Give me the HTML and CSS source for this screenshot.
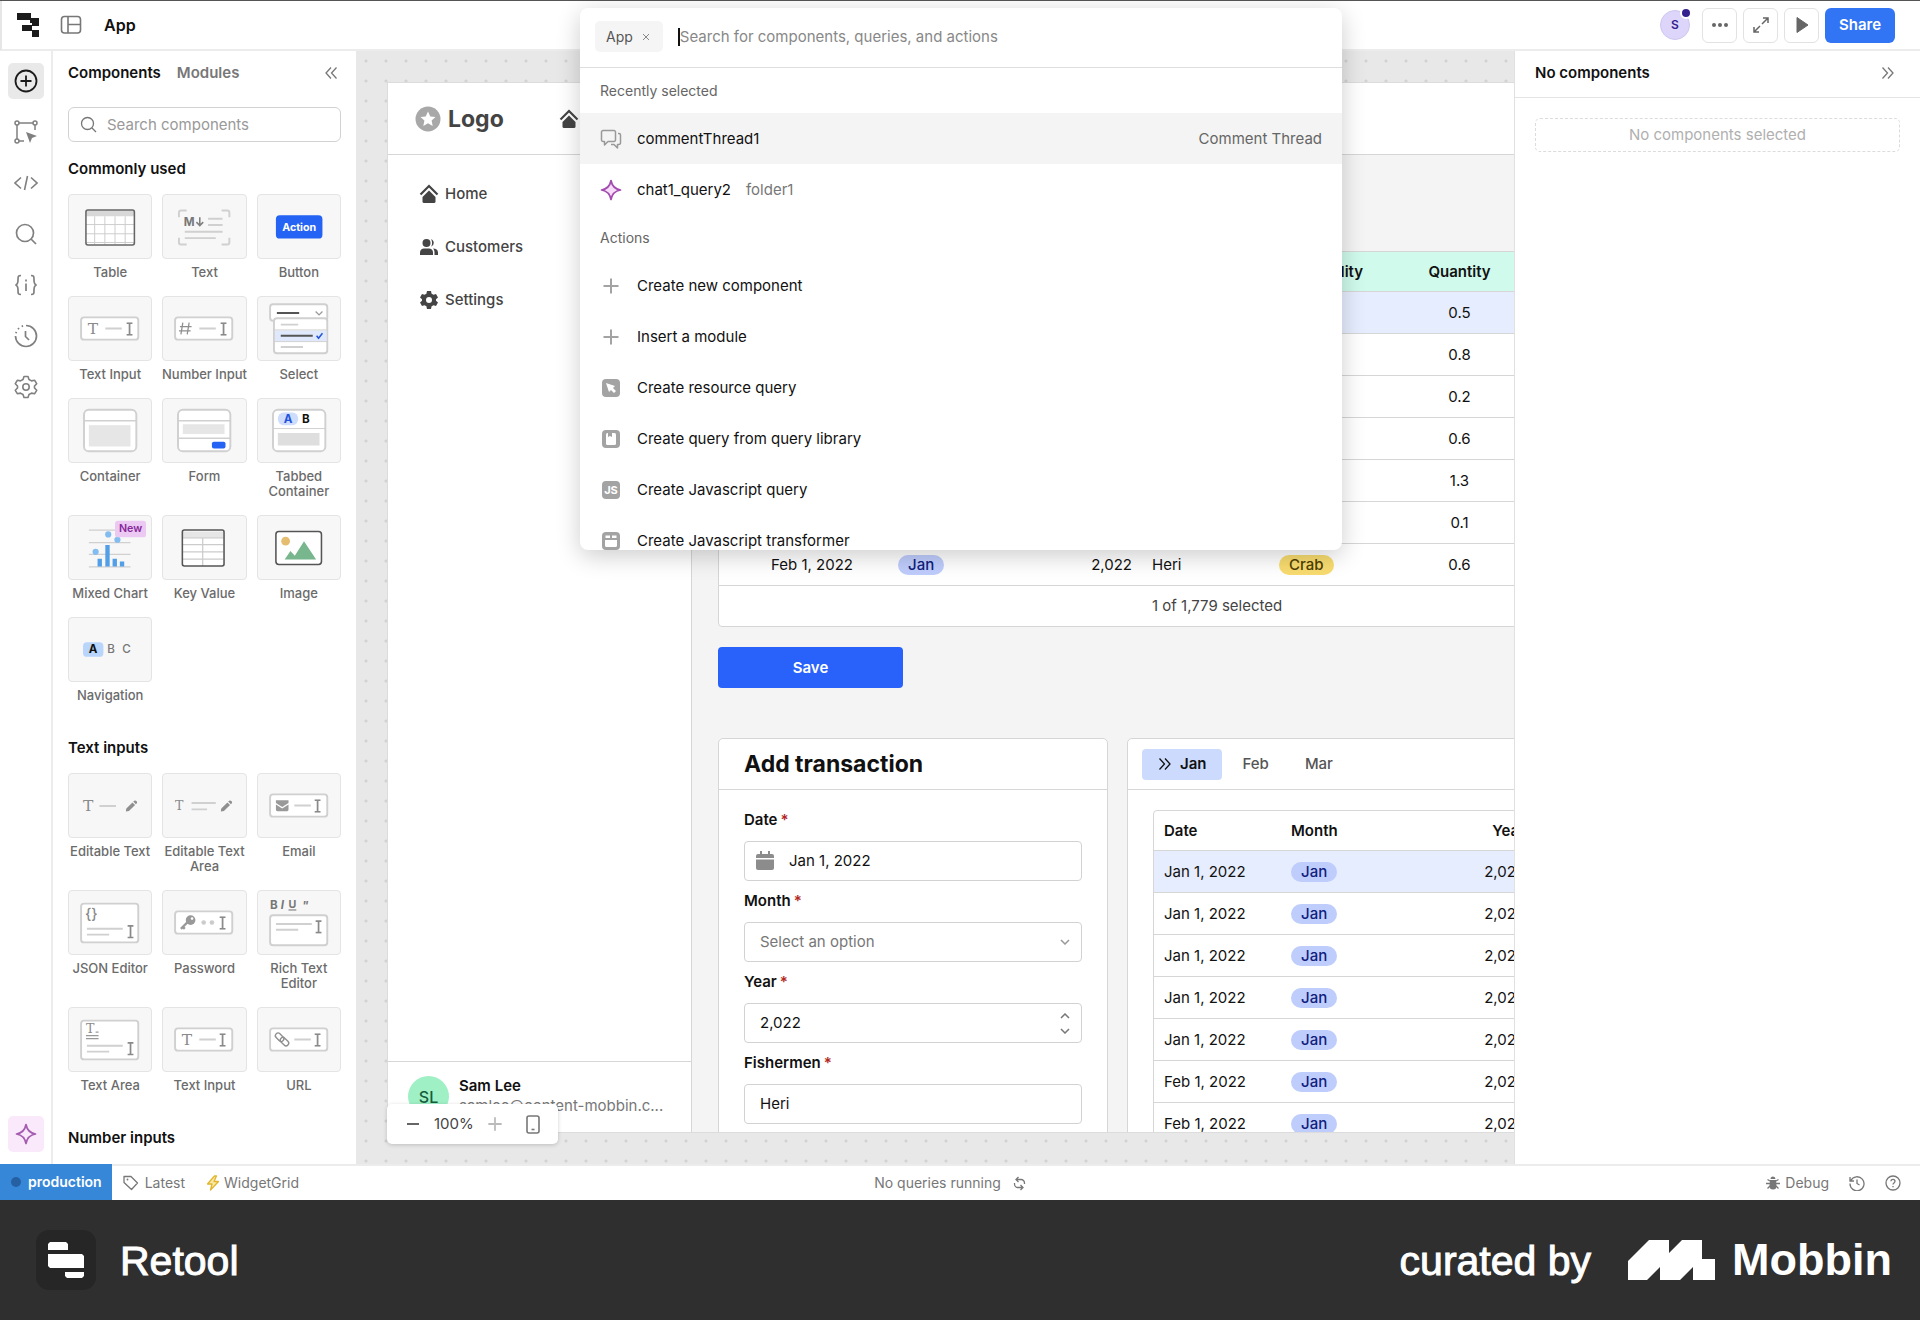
FILE: index.html
```html
<!DOCTYPE html>
<html lang="en">
<head>
    <meta charset="UTF-8">
    <meta name="viewport" content="width=device-width, initial-scale=1.0">
    <title>App | Retool</title>
    <link rel="stylesheet" href="styles.css">
</head>
<body>

<!-- shared icon parts -->
<svg class="defs" aria-hidden="true">
    <symbol id="ibeam" viewBox="0 0 8 14"><path d="M1 1h6M1 13h6M4 1v12" fill="none" stroke="#8a8a8a" stroke-width="1.8"/></symbol>
    <symbol id="pencil" viewBox="0 0 12 12"><path d="M0 12l.7-3.4L7 2.3 9.7 5 3.4 11.3zM7.8 1.5l1-1a1.3 1.3 0 0 1 1.8 0l.9.9a1.3 1.3 0 0 1 0 1.8l-1 1z" fill="#8f8f8f"/></symbol>
    <symbol id="home" viewBox="0 0 20 20"><path d="M1.500 10.500L10 2l8.500 8.500" fill="none" stroke="#444" stroke-width="2.200"/><path d="M10 6.500l6.500 6.500v4.500a1.500 1.500 0 0 1-1.500 1.500H5a1.500 1.500 0 0 1-1.500-1.500V13z" fill="#444"/></symbol>
    <symbol id="sparkle" viewBox="0 0 22 22"><path d="M11 1.5c1 5.500 3.500 8.500 9.500 9.500-6 1-8.500 4-9.500 9.500C10 15 7.500 12 1.500 11 7.500 10 10 7 11 1.500z" stroke-width="1.700" stroke-linejoin="round"/></symbol>
    <symbol id="chevrons" viewBox="0 0 14 14"><path d="M1.500 1.500L6.500 7l-5 5.500M7 1.500L12 7l-5 5.500" fill="none" stroke="currentColor" stroke-width="1.300"/></symbol>
    <symbol id="plus" viewBox="0 0 18 18"><path d="M9 1.500v15M1.500 9h15" fill="none" stroke="currentColor" stroke-width="2"/></symbol>
</svg>

<header class="topbar">
    <svg class="brand" width="24" height="24" viewBox="0 0 24 24"><path d="M1 0h14v5h8v8h-7v4h7v7h-7v-6H6v-6h10v-2h-2V7H1z" fill="#1b1b1b"/></svg>
    <button class="plain" aria-label="Toggle panels"><svg width="22" height="20" viewBox="0 0 22 20"><g fill="none" stroke="#777" stroke-width="1.600"><rect x="1.500" y="1.500" width="19" height="16.500" rx="3"/><path d="M8 1.500V18M8 9.500h12.500"/></g></svg></button>
    <h1>App</h1>
    <div class="top-actions">
        <span class="me">S<i></i></span>
        <button class="tool" aria-label="More"><svg width="18" height="6" viewBox="0 0 18 6"><g fill="#666"><circle cx="3" cy="3" r="2"/><circle cx="9" cy="3" r="2"/><circle cx="15" cy="3" r="2"/></g></svg></button>
        <button class="tool" aria-label="Expand"><svg width="18" height="18" viewBox="0 0 18 18"><path d="M11 2h5v5M16 2l-6 6M7 16H2v-5M2 16l6-6" fill="none" stroke="#666" stroke-width="1.500"/></svg></button>
        <button class="tool" aria-label="Preview"><svg width="16" height="18" viewBox="0 0 16 18"><path d="M3 1.500L14 9 3 16.500z" fill="#666" stroke="#666" stroke-linejoin="round"/></svg></button>
        <button class="share">Share</button>
    </div>
</header>

<div class="workspace">
    <nav class="rail">
        <button class="active" aria-label="Components"><svg width="24" height="24" viewBox="0 0 24 24"><g fill="none" stroke="#1b1b1b" stroke-width="1.800"><circle cx="12" cy="12" r="10.500"/><path d="M12 6.500v11M6.500 12h11"/></g></svg></button>
        <button aria-label="Tree"><svg width="24" height="24" viewBox="0 0 24 24"><g fill="none" stroke="#808080" stroke-width="1.500"><circle cx="3" cy="3" r="2"/><circle cx="21" cy="3" r="2"/><circle cx="3" cy="21" r="2"/><path d="M5 3h14M3 5v14M5 21h5M21 5v5"/></g><path d="M12 12l11 4-5 2-2 5z" fill="#808080"/></svg></button>
        <button aria-label="Code"><svg width="24" height="24" viewBox="0 0 24 24"><path d="M7 6.500L1 12l6 5.500M17 6.500l6 5.500-6 5.500M13.500 5l-3 14" fill="none" stroke="#808080" stroke-width="1.600"/></svg></button>
        <button aria-label="Search"><svg width="24" height="24" viewBox="0 0 24 24"><g fill="none" stroke="#808080" stroke-width="1.700"><circle cx="11" cy="11" r="8.500"/><path d="M17 17l5 5"/></g></svg></button>
        <button aria-label="State"><svg width="24" height="24" viewBox="0 0 24 24"><path d="M7 2.500c-3 0-3 1-3 4.500 0 3-.5 4.500-2.500 5C3.500 12.500 4 14 4 17c0 3.500 0 4.500 3 4.500M17 2.500c3 0 3 1 3 4.500 0 3 .5 4.500 2.500 5-2 .5-2.500 2-2.500 5 0 3.500 0 4.500-3 4.500M12 10.500V18M12 6.500v2" fill="none" stroke="#808080" stroke-width="1.700"/></svg></button>
        <button aria-label="History"><svg width="24" height="24" viewBox="0 0 24 24"><g fill="none" stroke="#808080" stroke-width="1.700"><path d="M12 1.500A10.500 10.500 0 1 1 1.500 12"/><path d="M1.900 9.200A10.500 10.500 0 0 1 10 1.700" stroke-dasharray="1.500 3"/><path d="M11.500 7v5.500l3.500 3.500"/></g></svg></button>
        <button aria-label="Settings"><svg width="24" height="24" viewBox="0 0 24 24"><g fill="none" stroke="#808080" stroke-width="1.600"><circle cx="12" cy="12" r="3.200"/><path d="M10 1.500h4l1 3 2.500 1.400 3.200-.6 2 3.400L20.500 11v2l2.200 2.300-2 3.400-3.200-.6L15 19.500l-1 3h-4l-1-3-2.500-1.400-3.200.6-2-3.400L3.500 13v-2L1.300 8.700l2-3.400 3.200.6L9 4.500z" stroke-linejoin="round"/></g></svg></button>
        <button class="ai" aria-label="Ask AI"><svg width="22" height="22" fill="none" stroke="#a45cb0"><use href="#sparkle"/></svg></button>
    </nav>

    <aside class="library">
        <div class="library-tabs">
            <button class="on">Components</button>
            <button>Modules</button>
            <button class="collapse flip" aria-label="Collapse"><svg width="14" height="14"><use href="#chevrons"/></svg></button>
        </div>
        <label class="search">
            <svg width="17" height="17" viewBox="0 0 17 17"><g fill="none" stroke="#777" stroke-width="1.300"><circle cx="7.500" cy="7.500" r="6"/><path d="M12 12l4 4"/></g></svg>
            <input type="text" placeholder="Search components" aria-label="Search components">
        </label>

        <section>
            <h2>Commonly used</h2>
            <div class="tiles">
                <button class="tile">
                    <svg viewBox="0 0 84 65"><rect x="17" y="15" width="50" height="37" rx="2" fill="#fff"/><path d="M17 16h50v6H17z" fill="#d8d8d8"/><path d="M17 30.500h50M17 40h50M17 49h50M26 22v29M36.500 22v29M47 22v29M57.500 22v29" stroke="#ccc" fill="none"/><rect x="17" y="15.500" width="50" height="36" rx="2" fill="none" stroke="#666" stroke-width="1.600"/></svg>
                    <span>Table</span>
                </button>
                <button class="tile">
                    <svg viewBox="0 0 84 65"><path d="M24 16h-6a2 2 0 0 0-2 2v5M60 16h6a2 2 0 0 1 2 2v5M24 51h-6a2 2 0 0 1-2-2v-5M60 51h6a2 2 0 0 0 2-2v-5" fill="none" stroke="#d0d0d0" stroke-width="2"/><path d="M46 24.500h15M46 31h15M22 38h39M22 44.500h32" stroke="#d0d0d0" stroke-width="2"/><text class="t-md" x="21" y="32">M</text><path d="M37.500 23v8M34 28l3.500 3.500L41 28" fill="none" stroke="#808080" stroke-width="1.600"/></svg>
                    <span>Text</span>
                </button>
                <button class="tile">
                    <svg viewBox="0 0 84 65"><rect x="18" y="21" width="48" height="24" rx="4" fill="#2563f5"/><text class="t-action" x="42" y="37">Action</text></svg>
                    <span>Button</span>
                </button>
                <button class="tile">
                    <svg viewBox="0 0 84 65"><rect x="12" y="21" width="59" height="23" rx="3" class="box"/><text class="t-slab" x="19" y="38">T</text><path d="M37 32.500h17" class="bar"/><use href="#ibeam" x="58" y="26" width="8" height="14"/></svg>
                    <span>Text Input</span>
                </button>
                <button class="tile">
                    <svg viewBox="0 0 84 65"><rect x="12" y="21" width="59" height="23" rx="3" class="box"/><path d="M20 26.500l-2 12M26.500 26.500l-2 12M17 30.500h12M16 35h12" fill="none" stroke="#8f8f8f" stroke-width="1.300"/><path d="M37 32.500h17" class="bar"/><use href="#ibeam" x="58" y="26" width="8" height="14"/></svg>
                    <span>Number Input</span>
                </button>
                <button class="tile">
                    <svg viewBox="0 0 84 65"><rect x="12" y="7.500" width="59" height="17" rx="3" class="box"/><rect x="16" y="22" width="55" height="36" rx="3" class="box"/><path d="M17 34.500h53v11H17z" fill="#dfe9fb"/><path d="M16 34h55M16 46h55" stroke="#d0d0d0"/><path d="M19 16.500h23M23 40h33" stroke="#555" stroke-width="2"/><path d="M23 28.500h18M23 51.500h23" class="bar"/><path d="M59 15l3.500 3.500L66 15" fill="none" stroke="#999" stroke-width="1.300"/><path d="M60 40l2 2.500 4-5" fill="none" stroke="#2254d8" stroke-width="1.600"/></svg>
                    <span>Select</span>
                </button>
                <button class="tile">
                    <svg viewBox="0 0 84 65"><rect x="15" y="11" width="54" height="43" rx="5" class="box"/><path d="M15 22.500h54" stroke="#d0d0d0" stroke-width="1.500"/><rect x="20" y="27" width="43" height="22" fill="#e6e6e6"/></svg>
                    <span>Container</span>
                </button>
                <button class="tile">
                    <svg viewBox="0 0 84 65"><rect x="15" y="11" width="54" height="43" rx="5" class="box"/><path d="M15 22.500h54M15 40.500h54" stroke="#d0d0d0" stroke-width="1.500"/><path d="M20 26h43v10H20z" fill="#e6e6e6"/><rect x="50" y="44" width="14" height="7" rx="2" fill="#2563f5"/></svg>
                    <span>Form</span>
                </button>
                <button class="tile">
                    <svg viewBox="0 0 84 65"><rect x="15" y="11" width="54" height="43" rx="5" class="box"/><path d="M15 30.500h54" stroke="#d0d0d0"/><rect x="20" y="14" width="21" height="13" rx="6" fill="#cdddfb"/><text class="t-ab blue" x="30.500" y="25">A</text><text class="t-ab" x="49" y="25">B</text><path d="M20 35h43v13H20z" fill="#dedede"/></svg>
                    <span>Tabbed Container</span>
                </button>
                <button class="tile">
                    <svg viewBox="0 0 84 65"><path d="M20 14.500h43M20 27.500h43M20 39.500h43M20 52.500h43" stroke="#d0d0d0" stroke-width="1.300"/><g fill="#82bcf0"><circle cx="40" cy="19" r="3.200"/><circle cx="49.500" cy="24.500" r="3.200"/><circle cx="27" cy="37" r="3.200"/></g><path d="M29 44h4.500v8H29zM37 30h4.500v22H37zM44.500 44H49v8h-4.500zM52 47h4.500v5H52z" fill="#529fe8"/><rect x="47" y="5" width="32" height="17" rx="3" fill="#ecc9f2"/><text class="t-new" x="63" y="17">New</text></svg>
                    <span>Mixed Chart</span>
                </button>
                <button class="tile">
                    <svg viewBox="0 0 84 65"><rect x="19.500" y="14.500" width="43" height="37" rx="2" fill="#fff"/><path d="M20 16h42v6H20z" fill="#e6e6e6"/><path d="M20 22.500h42M20 29.500h42M20 37h42M20 44.500h42M40.500 22.500v29" fill="none" stroke="#ccc" stroke-width="1.300"/><rect x="19.500" y="14.500" width="43" height="37" rx="2" fill="none" stroke="#555" stroke-width="1.600"/></svg>
                    <span>Key Value</span>
                </button>
                <button class="tile">
                    <svg viewBox="0 0 84 65"><rect x="18" y="16" width="47" height="34" rx="3" fill="#fff" stroke="#555" stroke-width="1.600"/><circle cx="28" cy="26" r="4.500" fill="#e5bd70"/><path d="M27 45l6-9 4.500 5L47 26l12.500 19z" fill="#78b68e"/></svg>
                    <span>Image</span>
                </button>
                <button class="tile">
                    <svg viewBox="0 0 84 65"><rect x="14" y="25" width="21" height="15" rx="4" fill="#b9d5fb"/><text class="t-ab" x="24.500" y="36.500">A</text><text class="t-ab thin" x="43" y="36.500">B</text><text class="t-ab thin" x="59" y="36.500">C</text></svg>
                    <span>Navigation</span>
                </button>
            </div>
        </section>

        <section>
            <h2>Text inputs</h2>
            <div class="tiles">
                <button class="tile">
                    <svg viewBox="0 0 84 65"><text class="t-slab" x="14" y="38">T</text><path d="M31 33h17" class="bar"/><use href="#pencil" x="58" y="27" width="12" height="12"/></svg>
                    <span>Editable Text</span>
                </button>
                <button class="tile">
                    <svg viewBox="0 0 84 65"><text class="t-slab small" x="12" y="37">T</text><path d="M29 30h25M29 36.500h16" class="bar"/><use href="#pencil" x="59" y="27" width="12" height="12"/></svg>
                    <span>Editable Text Area</span>
                </button>
                <button class="tile">
                    <svg viewBox="0 0 84 65"><rect x="12" y="21" width="59" height="23" rx="3" class="box"/><path d="M18 27h13v3l-6.500 4L18 30zM18 31.500l6.500 4 6.500-4V37a1.500 1.500 0 0 1-1.500 1.500h-10A1.500 1.500 0 0 1 18 37z" fill="#999"/><path d="M37 32.500h17" class="bar"/><use href="#ibeam" x="57" y="26" width="8" height="14"/></svg>
                    <span>Email</span>
                </button>
                <button class="tile">
                    <svg viewBox="0 0 84 65"><rect x="12" y="13" width="59" height="40" rx="3" class="box"/><text class="t-brace" x="16" y="29">{}</text><path d="M18 39h37M18 45h23" class="bar"/><use href="#ibeam" x="59" y="35" width="8" height="14"/></svg>
                    <span>JSON Editor</span>
                </button>
                <button class="tile">
                    <svg viewBox="0 0 84 65"><rect x="12" y="21" width="59" height="23" rx="3" class="box"/><circle cx="28" cy="30" r="5" fill="#999"/><circle cx="29.500" cy="28.500" r="1.300" fill="#fff"/><path d="M25 32l-7 7M20 37l2 2" stroke="#999" stroke-width="2.500"/><circle cx="41.500" cy="32.500" r="2.400" fill="#ccc"/><circle cx="50" cy="32.500" r="2.400" fill="#ccc"/><use href="#ibeam" x="57" y="26" width="8" height="14"/></svg>
                    <span>Password</span>
                </button>
                <button class="tile">
                    <svg viewBox="0 0 84 65"><text class="t-rich" x="12" y="19">B</text><text class="t-rich it" x="23" y="19">I</text><text class="t-rich un" x="31" y="18">U</text><text class="t-rich it" x="45" y="20">"</text><rect x="12" y="25" width="59" height="31" rx="3" class="box"/><path d="M18 34h37M18 40h23" class="bar"/><use href="#ibeam" x="58" y="30" width="8" height="14"/></svg>
                    <span>Rich Text Editor</span>
                </button>
                <button class="tile">
                    <svg viewBox="0 0 84 65"><rect x="12" y="13" width="59" height="40" rx="3" class="box"/><text class="t-slab small" x="17" y="26">T</text><path d="M27 25h3M17 28.500h13M17 31.500h13" stroke="#999" stroke-width="1.300"/><path d="M18 39h37M18 45h23" class="bar"/><use href="#ibeam" x="59" y="35" width="8" height="14"/></svg>
                    <span>Text Area</span>
                </button>
                <button class="tile">
                    <svg viewBox="0 0 84 65"><rect x="12" y="21" width="59" height="23" rx="3" class="box"/><text class="t-slab" x="19" y="38">T</text><path d="M37 32.500h17" class="bar"/><use href="#ibeam" x="57" y="26" width="8" height="14"/></svg>
                    <span>Text Input</span>
                </button>
                <button class="tile">
                    <svg viewBox="0 0 84 65"><rect x="12" y="21" width="59" height="23" rx="3" class="box"/><g fill="none" stroke="#8f8f8f" stroke-width="1.400"><rect x="17" y="27.500" width="10" height="5.500" rx="2.700" transform="rotate(45 22 30)"/><rect x="22" y="32" width="10" height="5.500" rx="2.700" transform="rotate(45 27 34.500)"/></g><path d="M37 32.500h17" class="bar"/><use href="#ibeam" x="57" y="26" width="8" height="14"/></svg>
                    <span>URL</span>
                </button>
            </div>
        </section>

        <section>
            <h2>Number inputs</h2>
        </section>
    </aside>

    <main class="canvas">
        <div class="frame">
            <div class="app-header">
                <svg width="26" height="26" viewBox="0 0 26 26"><circle cx="13" cy="13" r="12.500" fill="#a8a8a8"/><path d="M13 5.500l2.300 4.900 5.200.6-3.900 3.600 1.100 5.300L13 17.300l-4.700 2.600 1.100-5.300L5.500 11l5.200-.6z" fill="#fff"/></svg>
                <strong>Logo</strong>
                <svg class="header-home" width="20" height="20"><use href="#home"/></svg>
            </div>
            <div class="app-body">
                <div class="app-side">
                    <nav>
                        <a href="#"><svg width="20" height="20"><use href="#home"/></svg>Home</a>
                        <a href="#"><svg width="20" height="20" viewBox="0 0 20 20"><g fill="#444"><circle cx="7.500" cy="6" r="4"/><path d="M1 18v-2.500C1 13 3 11.500 5 11.500h5c2 0 4 1.500 4 4V18zM12 2.200a4 4 0 0 1 0 7.600c1.500-2 1.500-5.600 0-7.600zM14 11.500c3 0 5 1.500 5 4V18h-3.500v-2.500c0-1.500-.5-3-1.500-4z"/></g></svg>Customers</a>
                        <a href="#"><svg width="20" height="20" viewBox="0 0 20 20"><path fill-rule="evenodd" d="M8 1h4l.6 2.700 1.900 1.100L17 4l2 3.400L17 9.200v1.600l2 1.800-2 3.400-2.500-.8-1.900 1.100L12 19H8l-.6-2.700-1.900-1.100L3 16l-2-3.400 2-1.800V9.200L1 7.400 3 4l2.500.8 1.900-1.100zM10 7a3 3 0 1 0 0 6 3 3 0 0 0 0-6z" fill="#444"/></svg>Settings</a>
                    </nav>
                    <div class="user">
                        <span class="initials">SL</span>
                        <div>
                            <b>Sam Lee</b>
                            <span>samlee@content-mobbin.c...</span>
                        </div>
                    </div>
                </div>

                <div class="app-main">
                    <div class="grid-box catches">
                        <table>
                            <colgroup><col class="check"><col><col><col><col><col><col></colgroup>
                            <thead>
                                <tr><th></th><th>Date</th><th>Month</th><th class="num">Year</th><th>Fishermen</th><th>Commodity</th><th class="mid">Quantity</th></tr>
                            </thead>
                            <tbody>
                                <tr class="picked"><td></td><td>Jan 1, 2022</td><td><span class="pill">Jan</span></td><td class="num">2,022</td><td>Heri</td><td></td><td class="mid">0.5</td></tr>
                                <tr><td></td><td>Jan 1, 2022</td><td><span class="pill">Jan</span></td><td class="num">2,022</td><td>Heri</td><td></td><td class="mid">0.8</td></tr>
                                <tr><td></td><td>Jan 1, 2022</td><td><span class="pill">Jan</span></td><td class="num">2,022</td><td>Heri</td><td></td><td class="mid">0.2</td></tr>
                                <tr><td></td><td>Jan 1, 2022</td><td><span class="pill">Jan</span></td><td class="num">2,022</td><td>Heri</td><td></td><td class="mid">0.6</td></tr>
                                <tr><td></td><td>Jan 1, 2022</td><td><span class="pill">Jan</span></td><td class="num">2,022</td><td>Heri</td><td></td><td class="mid">1.3</td></tr>
                                <tr><td></td><td>Feb 1, 2022</td><td><span class="pill">Jan</span></td><td class="num">2,022</td><td>Heri</td><td></td><td class="mid">0.1</td></tr>
                                <tr><td></td><td>Feb 1, 2022</td><td><span class="pill">Jan</span></td><td class="num">2,022</td><td>Heri</td><td><span class="pill crab">Crab</span></td><td class="mid">0.6</td></tr>
                            </tbody>
                            <tfoot>
                                <tr><td colspan="4"></td><td colspan="3">1 of 1,779 selected</td></tr>
                            </tfoot>
                        </table>
                    </div>

                    <button class="save">Save</button>

                    <div class="cards">
                        <form class="card">
                            <header><h2>Add transaction</h2></header>
                            <div class="fields">
                                <label for="date">Date<em>*</em></label>
                                <div class="field">
                                    <svg width="18" height="20" viewBox="0 0 18 20"><path d="M2 3h14a2 2 0 0 1 2 2v2H0V5a2 2 0 0 1 2-2zM0 8.500h18V17a2 2 0 0 1-2 2H2a2 2 0 0 1-2-2zM4 0h2v5H4zM12 0h2v5h-2z" fill="#8c8c8c"/></svg>
                                    <input id="date" type="text" value="Jan 1, 2022">
                                </div>
                                <label for="month">Month<em>*</em></label>
                                <div class="field">
                                    <select id="month"><option>Select an option</option></select>
                                    <svg width="10" height="6" viewBox="0 0 10 6"><path d="M1 1l4 4 4-4" fill="none" stroke="#999" stroke-width="1.500"/></svg>
                                </div>
                                <label for="year">Year<em>*</em></label>
                                <div class="field">
                                    <input id="year" type="text" value="2,022">
                                    <span class="steps">
                                        <button type="button" aria-label="Increase"><svg width="10" height="6" viewBox="0 0 10 6"><path d="M1 5l4-4 4 4" fill="none" stroke="#777" stroke-width="1.500"/></svg></button>
                                        <button type="button" aria-label="Decrease"><svg width="10" height="6" viewBox="0 0 10 6"><path d="M1 1l4 4 4-4" fill="none" stroke="#777" stroke-width="1.500"/></svg></button>
                                    </span>
                                </div>
                                <label for="fishermen">Fishermen<em>*</em></label>
                                <div class="field"><input id="fishermen" type="text" value="Heri"></div>
                            </div>
                        </form>

                        <div class="card">
                            <header class="tabs">
                                <button class="on"><svg width="14" height="14"><use href="#chevrons"/></svg>Jan</button>
                                <button>Feb</button>
                                <button>Mar</button>
                            </header>
                            <div class="grid-box monthly">
                                <table>
                                    <thead>
                                        <tr><th>Date</th><th>Month</th><th class="num">Year</th></tr>
                                    </thead>
                                    <tbody>
                                        <tr class="picked"><td>Jan 1, 2022</td><td><span class="pill">Jan</span></td><td class="num">2,022</td></tr>
                                        <tr><td>Jan 1, 2022</td><td><span class="pill">Jan</span></td><td class="num">2,022</td></tr>
                                        <tr><td>Jan 1, 2022</td><td><span class="pill">Jan</span></td><td class="num">2,022</td></tr>
                                        <tr><td>Jan 1, 2022</td><td><span class="pill">Jan</span></td><td class="num">2,022</td></tr>
                                        <tr><td>Jan 1, 2022</td><td><span class="pill">Jan</span></td><td class="num">2,022</td></tr>
                                        <tr><td>Feb 1, 2022</td><td><span class="pill">Jan</span></td><td class="num">2,022</td></tr>
                                        <tr><td>Feb 1, 2022</td><td><span class="pill">Jan</span></td><td class="num">2,022</td></tr>
                                    </tbody>
                                </table>
                            </div>
                        </div>
                    </div>
                </div>
            </div>
        </div>

        <div class="zoom">
            <button aria-label="Zoom out"><svg width="16" height="16" viewBox="0 0 16 16"><path d="M2 8h12" stroke="#666" stroke-width="2"/></svg></button>
            <span>100%</span>
            <button class="faint" aria-label="Zoom in"><svg width="16" height="16"><use href="#plus"/></svg></button>
            <button class="device" aria-label="Mobile layout"><svg width="14" height="19" viewBox="0 0 14 19"><rect x="1" y="1" width="12" height="17" rx="2" fill="none" stroke="#777" stroke-width="1.600"/><path d="M5.500 14.500h3" stroke="#777" stroke-width="1.600"/></svg></button>
        </div>
    </main>

    <aside class="inspector">
        <header>
            <h2>No components</h2>
            <button class="collapse" aria-label="Collapse"><svg width="14" height="14"><use href="#chevrons"/></svg></button>
        </header>
        <p>No components selected</p>
    </aside>
</div>

<div class="statusbar">
    <div class="left">
        <button class="env"><i></i>production</button>
        <button><svg width="16" height="16" viewBox="0 0 16 16"><path d="M1 1.500h7l6.500 6.500L8.500 14.500 1 7.500z" fill="none" stroke="#777" stroke-width="1.300" stroke-linejoin="round"/><circle cx="4.500" cy="4.500" r=".9" fill="#777"/></svg>Latest</button>
        <button class="grid-mode"><svg width="14" height="16" viewBox="0 0 14 16"><path d="M8.500 1L1.500 9H6l-1.500 6 8-8.500H8L10.500 1z" fill="#fbe9a8" stroke="#e2b52c" stroke-width="1.300" stroke-linejoin="round"/></svg>WidgetGrid</button>
    </div>
    <div class="center">No queries running<svg width="15" height="15" viewBox="0 0 15 15"><path d="M4.500 3.500h4.500a3.500 3.500 0 0 1 3.500 3.500v1M6.500 1L4 3.500 6.500 6M10.500 11.500H6A3.500 3.500 0 0 1 2.500 8V7M8.500 9l2.500 2.500L8.500 14" fill="none" stroke="#777" stroke-width="1.300"/></svg></div>
    <div class="right">
        <button><svg width="14" height="14" viewBox="0 0 14 14"><path d="M4.500 3a2.500 2.500 0 0 1 5 0zM4 4h6l.5 6a3.500 3.500 0 0 1-7 0z" fill="#777"/><path d="M4 5L1.500 3.500M10 5l2.500-1.500M0 7.500h14M4 10l-2.500 2.500M10 10l2.500 2.500" stroke="#777" stroke-width="1.300"/></svg>Debug</button>
        <button aria-label="History"><svg width="16" height="16" viewBox="0 0 16 16"><path d="M1 2v4h4M1.800 5.500A7 7 0 1 1 1 8.500M8 4.500v4l2.500 1.500" fill="none" stroke="#777" stroke-width="1.300"/></svg></button>
        <button aria-label="Help"><svg width="16" height="16" viewBox="0 0 16 16"><circle cx="8" cy="8" r="7" fill="none" stroke="#777" stroke-width="1.300"/><path d="M6 6.300c0-2.600 4-2.400 4 0C10 8 8 7.800 8 9.500M8 11v1.300" fill="none" stroke="#777" stroke-width="1.300"/></svg></button>
    </div>
</div>

<footer class="credit">
    <span class="badge"><svg width="36" height="36" viewBox="0 0 36 36"><path d="M2 0h16l2 2v6H0V2zM0 12h34l2 2v12H2l-2-2zM17 30h19v4l-2 2H19l-2-2z" fill="#fff"/></svg></span>
    <span class="name">Retool</span>
    <span class="by">curated by</span>
    <svg width="88" height="40" viewBox="0 0 88 40"><path d="M0 21L21 0h20v13L54 0h20v19h13v21H65V27L52 40H32V27L19 40H0z" fill="#fff"/></svg>
    <span class="mobbin">Mobbin</span>
</footer>

<div class="palette" role="dialog" aria-label="Command palette">
    <div class="palette-search">
        <button class="scope">App<svg width="8" height="8" viewBox="0 0 8 8"><path d="M1 1l6 6M7 1L1 7" stroke="#888" fill="none"/></svg></button>
        <input type="text" placeholder="Search for components, queries, and actions" aria-label="Search for components, queries, and actions">
    </div>
    <h3>Recently selected</h3>
    <button class="row hover"><svg width="22" height="20" viewBox="0 0 22 20"><g fill="none" stroke="#999" stroke-width="1.500" stroke-linejoin="round"><path d="M3 1.500h11a1.500 1.500 0 0 1 1.500 1.500v8a1.500 1.500 0 0 1-1.500 1.500H8L4.500 16v-3.500H3A1.500 1.500 0 0 1 1.500 11V3A1.500 1.500 0 0 1 3 1.500z"/><path d="M18 4.500h1A1.500 1.500 0 0 1 20.500 6v8a1.500 1.500 0 0 1-1.500 1.500h-1.500V19L14 15.500h-3"/></g></svg>commentThread1<span class="kind">Comment Thread</span></button>
    <button class="row"><svg width="22" height="22" fill="#f6dcf8" stroke="#a34bb0"><use href="#sparkle"/></svg>chat1_query2<span>folder1</span></button>
    <h3>Actions</h3>
    <button class="row"><svg class="grey" width="22" height="18"><use href="#plus"/></svg>Create new component</button>
    <button class="row"><svg class="grey" width="22" height="18"><use href="#plus"/></svg>Insert a module</button>
    <button class="row"><svg width="22" height="18" viewBox="0 0 22 18"><rect x="2" width="18" height="18" rx="4" fill="#a3a3a3"/><path d="M6 4l9 3-2 2 3 3-2 2-3-3-2 2z" fill="#fff"/></svg>Create resource query</button>
    <button class="row"><svg width="22" height="18" viewBox="0 0 22 18"><rect x="2" width="18" height="18" rx="4" fill="#a3a3a3"/><rect x="6" y="3" width="10" height="12" rx="1.500" fill="#fff"/><path d="M8 3h4v4l-2-1-2 1z" fill="#a3a3a3"/></svg>Create query from query library</button>
    <button class="row"><svg width="22" height="18" viewBox="0 0 22 18"><rect x="2" width="18" height="18" rx="4" fill="#a3a3a3"/><text class="t-js" x="11" y="13">JS</text></svg>Create Javascript query</button>
    <button class="row"><svg width="22" height="18" viewBox="0 0 22 18"><rect x="2" width="18" height="18" rx="4" fill="#a3a3a3"/><path d="M5 8h12v5.500A1.500 1.500 0 0 1 15.500 15h-9A1.500 1.500 0 0 1 5 13.500zM5.500 3.500h4.500V6H5.500zM12 3.500h4.500V6H12z" fill="#fff"/></svg>Create Javascript transformer</button>
</div>

</body>
</html>
```
FILE: styles.css
```css
* {
    box-sizing: border-box;
}

body {
    margin: 0;
    height: 100vh;
    display: flex;
    flex-direction: column;
    overflow: hidden;
    border-top: 1px solid #555;
    background: #fff;
    color: #111;
    font-family: Inter, "Liberation Sans", sans-serif;
    font-size: 15px;
    line-height: 20px;
}

h1, h2, h3, p {
    margin: 0;
    font-size: 15px;
    font-weight: 600;
}

button, input, select {
    margin: 0;
    padding: 0;
    border: 0;
    background: none;
    color: inherit;
    font: inherit;
    outline: none;
}

button {
    display: flex;
    align-items: center;
    justify-content: center;
    flex: none;
}

svg {
    flex: none;
}

.defs {
    display: none;
}

/* Top bar */
.topbar {
    flex: none;
    display: flex;
    align-items: center;
    height: 50px;
    padding: 0 25px 0 14px;
    border-bottom: 2px solid #ececec;
    border-left: 2px solid #e6e6e6;
}

.topbar .plain {
    margin: 0 22px 0 20px;
}

.topbar h1 {
    font-size: 16px;
}

.top-actions {
    display: flex;
    align-items: center;
    gap: 6px;
    margin-left: auto;
}

.me {
    position: relative;
    display: grid;
    place-items: center;
    width: 30px;
    height: 30px;
    margin-right: 6px;
    border: 1px solid #cfc6ee;
    border-radius: 50%;
    background: #ddd6fa;
    color: #34208f;
    font-size: 12px;
    font-weight: 600;
}

.me i {
    position: absolute;
    top: -4px;
    right: -3px;
    width: 12px;
    height: 12px;
    border: 2px solid #fff;
    border-radius: 50%;
    background: #34208f;
}

.tool {
    width: 35px;
    height: 35px;
    border: 1px solid #e2e2e2;
    border-radius: 6px;
}

.share {
    width: 70px;
    height: 35px;
    border-radius: 6px;
    background: #3175f5;
    color: #fff;
    font-weight: 600;
}

/* Workspace */
.workspace {
    flex: 1;
    min-height: 0;
    display: grid;
    grid-template-columns: 53px 303px minmax(0, 1fr) 406px;
    grid-template-rows: minmax(0, 1fr);
}

.rail {
    display: flex;
    flex-direction: column;
    align-items: center;
    gap: 15px;
    padding: 12px 0;
    border-right: 2px solid #ececec;
}

.rail button {
    width: 36px;
    height: 36px;
    border-radius: 5px;
}

.rail .active {
    background: #e9e9e9;
}

.rail .ai {
    margin-top: auto;
    background: #fae8fb;
}

/* Component library */
.library {
    padding: 12px 15px 0;
    overflow: hidden;
}

.library-tabs {
    display: flex;
    align-items: center;
    gap: 16px;
    color: #777;
    font-weight: 600;
}

.library-tabs .on {
    color: #111;
}

.collapse {
    margin-left: auto;
    padding: 0 3px;
    color: #777;
}

.flip svg {
    transform: scaleX(-1);
}

.search {
    display: flex;
    align-items: center;
    gap: 10px;
    height: 35px;
    margin: 24px 0 17px;
    padding: 0 12px 0 11px;
    border: 1px solid #d2d2d2;
    border-radius: 6px;
}

.search input {
    flex: 1;
    min-width: 0;
}

input::placeholder {
    color: #999;
    opacity: 1;
}

.library section {
    margin-bottom: 35px;
}

.library h2 {
    margin-bottom: 15px;
}

.tiles {
    display: grid;
    grid-template-columns: repeat(3, minmax(0, 1fr));
    align-items: start;
    gap: 16px 10px;
}

.tile {
    flex-direction: column;
    gap: 6px;
    color: #6b6b6b;
    font-size: 13px;
    font-weight: 500;
    line-height: 15px;
}

.tile svg {
    width: 100%;
    height: 65px;
    border: 1px solid #e4e4e4;
    border-radius: 4px;
    background: #f7f7f7;
}

.tile span {
    margin: 0 -4px;
}

.box {
    fill: #fff;
    stroke: #d0d0d0;
    stroke-width: 2px;
}

.bar {
    stroke: #d0d0d0;
    stroke-width: 2px;
}

.tile text {
    fill: #8a8a8a;
    font-size: 12px;
}

.tile .t-slab {
    font-family: "DejaVu Serif", serif;
    font-size: 16px;
}

.tile .small {
    font-size: 13px;
}

.tile .t-md {
    fill: #777;
    font-weight: 700;
}

.tile .t-action {
    fill: #fff;
    font-size: 11px;
    font-weight: 700;
    text-anchor: middle;
}

.tile .t-ab {
    fill: #111;
    font-weight: 700;
    text-anchor: middle;
}

.tile .blue {
    fill: #2254d8;
}

.tile .thin {
    fill: #777;
    font-weight: 500;
}

.tile .t-new {
    fill: #86289a;
    font-size: 11px;
    font-weight: 600;
    text-anchor: middle;
}

.tile .t-brace {
    font-size: 15px;
    font-weight: 500;
}

.tile .t-rich {
    fill: #777;
    font-weight: 700;
}

.tile .it {
    font-style: italic;
}

.tile .un {
    font-size: 11px;
    text-decoration: underline;
}

/* Canvas */
.canvas {
    position: relative;
    overflow: hidden;
    padding: 31px 0 31px 31px;
    background: #e8e8e8 radial-gradient(circle, #d2d2d2 1px, transparent 2px) 0 0 / 20px 20px;
}

/* the app is wider than the visible canvas */
.frame {
    display: flex;
    flex-direction: column;
    height: 100%;
    margin-right: -300px;
    overflow: hidden;
    border: 1px solid #dcdcdc;
    background: #f4f4f4;
}

.app-header {
    flex: none;
    display: flex;
    align-items: center;
    gap: 7px;
    height: 72px;
    padding-left: 27px;
    border-bottom: 1px solid #d6d6d6;
    background: #fff;
    color: #444;
    font-size: 23px;
}

.header-home {
    margin-left: 48px;
}

.app-body {
    flex: 1;
    min-height: 0;
    display: grid;
    grid-template-columns: 304px minmax(0, 1fr);
    grid-template-rows: minmax(0, 1fr);
}

.app-side {
    display: flex;
    flex-direction: column;
    border-right: 1px solid #d6d6d6;
    background: #fff;
}

.app-side nav {
    display: flex;
    flex-direction: column;
    gap: 33px;
    padding: 29px 31px;
}

.app-side a {
    display: flex;
    align-items: center;
    gap: 6px;
    color: #444;
    font-weight: 500;
    text-decoration: none;
}

.user {
    display: flex;
    align-items: flex-start;
    gap: 10px;
    height: 71px;
    margin-top: auto;
    padding: 14px 20px;
    border-top: 1px solid #d6d6d6;
}

.initials {
    flex: none;
    display: grid;
    place-items: center;
    width: 41px;
    height: 41px;
    border-radius: 50%;
    background: #a0f0c6;
    color: #145c3a;
    font-size: 16px;
    font-weight: 500;
}

.user div {
    display: flex;
    flex-direction: column;
    color: #777;
    white-space: nowrap;
}

.user b {
    color: #111;
    font-weight: 600;
}

.app-main {
    padding: 96px 0 0 26px;
}

.grid-box {
    overflow: hidden;
    border: 1px solid #d6d6d6;
    border-radius: 4px;
    background: #fff;
}

table {
    table-layout: fixed;
    border-collapse: separate;
    border-spacing: 0;
}

col, .monthly th {
    width: 127px;
}

.check {
    width: 42px;
}

.catches table {
    width: 804px;
}

.monthly table {
    width: 381px;
}

th, td {
    height: 42px;
    padding: 0 10px;
    border-bottom: 1px solid #d6d6d6;
    text-align: left;
    vertical-align: middle;
}

th {
    height: 40px;
    font-weight: 600;
}

.catches th {
    background: #cffaec;
}

tfoot td {
    height: 40px;
    border-bottom: 0;
    color: #444;
}

.picked td {
    background: #e6edfe;
}

.num {
    text-align: right;
}

.mid {
    text-align: center;
}

.pill {
    display: inline-block;
    padding: 0 10px;
    border-radius: 10px;
    background: #bfcdfc;
    color: #10207c;
    font-weight: 500;
    vertical-align: middle;
}

.crab {
    background: #f8dc70;
    color: #4f4000;
}

.save {
    width: 185px;
    height: 41px;
    margin-top: 20px;
    border-radius: 4px;
    background: #2962fb;
    color: #fff;
    font-weight: 600;
}

.cards {
    display: grid;
    grid-template-columns: 390px minmax(0, 1fr);
    gap: 19px;
    margin-top: 50px;
}

.card {
    border: 1px solid #d6d6d6;
    border-radius: 5px;
    background: #fff;
}

.card header {
    display: flex;
    align-items: center;
    height: 51px;
    padding: 0 25px;
    border-bottom: 1px solid #d6d6d6;
}

.card h2 {
    font-size: 23px;
    font-weight: 700;
}

.fields {
    padding: 20px 25px;
}

.fields label {
    display: block;
    font-weight: 600;
}

.fields em {
    margin-left: 3px;
    color: #b3261e;
    font-style: normal;
}

.field {
    display: flex;
    align-items: center;
    height: 40px;
    margin: 11px 0 10px;
    padding: 0 11px 0 15px;
    border: 1px solid #d2d2d2;
    border-radius: 4px;
}

.field > svg:first-child {
    margin: 0 15px 0 -4px;
}

.field input, .field select {
    flex: 1;
    min-width: 0;
    appearance: none;
}

.field select {
    color: #777;
}

.steps {
    display: flex;
    flex-direction: column;
    gap: 9px;
}

.card .tabs {
    gap: 4px;
    padding: 0 14px;
    color: #555;
}

.tabs button {
    gap: 8px;
    height: 31px;
    padding: 0 16px;
    border-radius: 4px;
    font-weight: 500;
}

.tabs .on {
    background: #ccdbfd;
    color: #111;
    font-weight: 600;
}

.monthly {
    margin: 20px 25px;
}

.zoom {
    position: absolute;
    left: 31px;
    bottom: 20px;
    display: flex;
    align-items: center;
    gap: 13px;
    height: 40px;
    padding: 0 18px;
    border-radius: 5px;
    background: #fff;
    box-shadow: 0 1px 4px rgba(0, 0, 0, .18);
    color: #444;
}

.zoom .faint {
    color: #bbb;
}

.zoom .device {
    margin-left: 10px;
}

/* Inspector */
.inspector {
    border-left: 1px solid #e0e0e0;
    background: #fff;
}

.inspector header {
    display: flex;
    align-items: center;
    height: 47px;
    padding: 0 22px 2px 20px;
    border-bottom: 1px solid #e4e4e4;
}

.inspector p {
    margin: 20px;
    padding: 6px;
    border: 1px dashed #dcdcdc;
    border-radius: 5px;
    color: #b0b0b0;
    font-weight: 400;
    text-align: center;
}

/* Status bar */
.statusbar {
    flex: none;
    display: grid;
    grid-template-columns: 1fr auto 1fr;
    height: 36px;
    padding-right: 19px;
    border-top: 2px solid #ececec;
    color: #777;
    font-size: 14px;
}

.statusbar > div {
    display: flex;
    align-items: center;
}

.left button {
    gap: 6px;
    margin-left: 11px;
}

.left .env {
    align-self: stretch;
    gap: 7px;
    margin: -2px 0 0;
    padding: 0 10px 0 11px;
    background: #3787d8;
    color: #fff;
    font-weight: 600;
}

.env i {
    width: 10px;
    height: 10px;
    border-radius: 50%;
    background: #2560a3;
}

.left .grid-mode {
    gap: 4px;
    margin-left: 21px;
}

.center {
    gap: 11px;
}

.right {
    justify-content: flex-end;
    gap: 20px;
}

.right button {
    gap: 5px;
}

/* Credit strip */
.credit {
    flex: none;
    display: flex;
    align-items: center;
    height: 120px;
    padding: 0 28px 0 36px;
    background: #2f2f2f;
    color: #fff;
    font-family: "Liberation Sans", sans-serif;
    font-size: 41px;
    line-height: 48px;
}

.badge {
    display: grid;
    place-items: center;
    width: 60px;
    height: 60px;
    margin-right: 24px;
    border-radius: 13px;
    background: #262626;
}

.name, .by {
    padding-top: 2px;
    -webkit-text-stroke: 1px #fff;
}

.by {
    margin: 0 37px 0 auto;
}

.mobbin {
    margin-left: 16px;
    font-size: 45px;
    font-weight: 700;
}

/* Command palette */
.palette {
    position: absolute;
    top: 8px;
    left: 50%;
    width: 762px;
    height: 542px;
    margin-left: -380px;
    overflow: hidden;
    border-radius: 8px;
    background: #fff;
    box-shadow: 0 6px 24px rgba(0, 0, 0, .2);
}

.palette-search {
    display: flex;
    align-items: center;
    gap: 15px;
    height: 60px;
    padding: 0 15px 2px;
    border-bottom: 1px solid #dedede;
}

.scope {
    gap: 9px;
    height: 31px;
    padding: 0 13px 0 11px;
    border-radius: 5px;
    background: #f5f5f5;
    color: #555;
    font-size: 14px;
}

.palette-search input {
    flex: 1;
    min-width: 0;
    height: 18px;
    border-left: 2px solid #111;
}

.palette-search input::placeholder {
    color: #888;
}

.palette h3 {
    padding: 0 20px;
    color: #666;
    font-size: 14px;
    font-weight: 400;
    line-height: 45px;
}

.row {
    justify-content: flex-start;
    gap: 15px;
    width: 100%;
    height: 51px;
    padding: 0 20px;
}

.row.hover {
    background: #f4f4f4;
}

.row span {
    color: #777;
}

.row .kind {
    margin-left: auto;
    color: #666;
}

.grey {
    color: #a3a3a3;
}

.t-js {
    fill: #fff;
    font-size: 11px;
    font-weight: 700;
    text-anchor: middle;
}
```
